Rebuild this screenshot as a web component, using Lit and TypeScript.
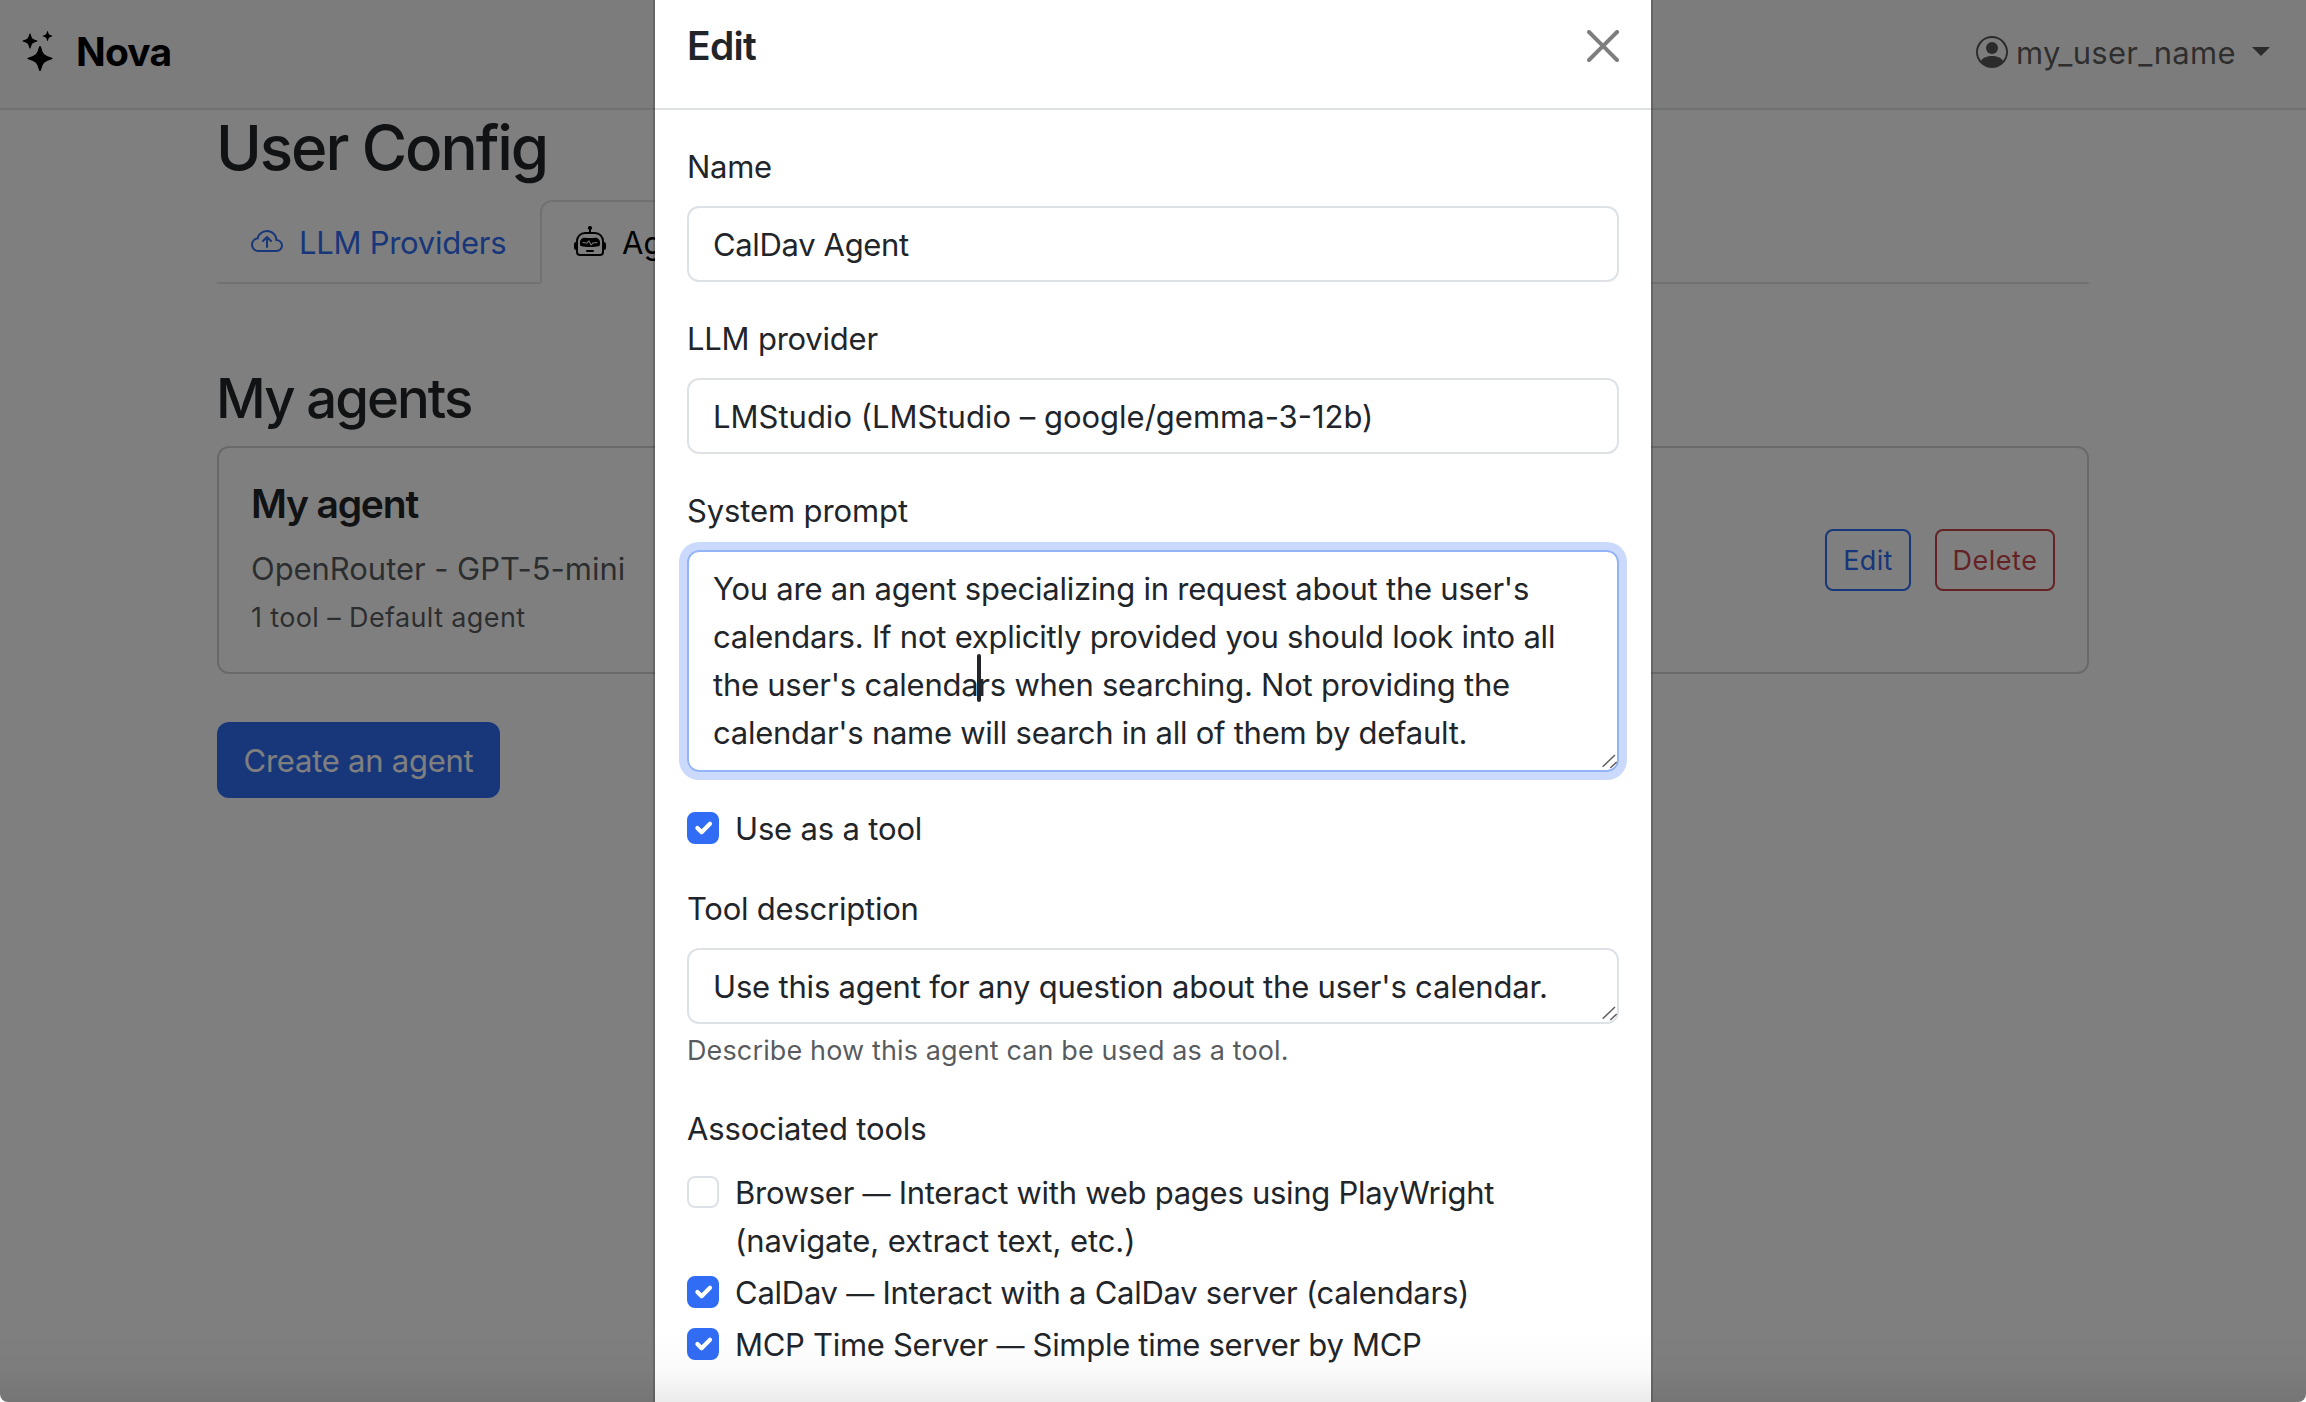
import { LitElement, html, css, svg, nothing } from 'lit';
import { customElement, property } from 'lit/decorators.js';

const ICONS: Record<string, string[]> = {
  stars: [
    'M7.657 6.247c.11-.33.576-.33.686 0l.645 1.937a2.89 2.89 0 0 0 1.829 1.828l1.936.645c.33.11.33.576 0 .686l-1.937.645a2.89 2.89 0 0 0-1.828 1.829l-.645 1.936a.361.361 0 0 1-.686 0l-.645-1.937a2.89 2.89 0 0 0-1.828-1.828l-1.937-.645a.361.361 0 0 1 0-.686l1.937-.645a2.89 2.89 0 0 0 1.828-1.828z',
    'M3.794 1.148a.217.217 0 0 1 .412 0l.387 1.162c.173.518.579.924 1.097 1.097l1.162.387a.217.217 0 0 1 0 .412l-1.162.387A1.73 1.73 0 0 0 4.593 5.69l-.387 1.162a.217.217 0 0 1-.412 0L3.407 5.69A1.73 1.73 0 0 0 2.31 4.593l-1.162-.387a.217.217 0 0 1 0-.412l1.162-.387A1.73 1.73 0 0 0 3.407 2.31z',
    'M10.863.099a.145.145 0 0 1 .274 0l.258.774c.115.346.386.617.732.732l.774.258a.145.145 0 0 1 0 .274l-.774.258a1.16 1.16 0 0 0-.732.732l-.258.774a.145.145 0 0 1-.274 0l-.258-.774a1.16 1.16 0 0 0-.732-.732L9.1 2.137a.145.145 0 0 1 0-.274l.774-.258c.346-.115.617-.386.732-.732z',
  ],
  cloud: [
    'M7.646 5.146a.5.5 0 0 1 .708 0l2 2a.5.5 0 0 1-.708.708L8.5 6.707V10.5a.5.5 0 0 1-1 0V6.707L6.354 7.854a.5.5 0 1 1-.708-.708z',
    'M4.406 3.342A5.53 5.53 0 0 1 8 2c2.69 0 4.923 2 5.166 4.579C14.758 6.804 16 8.137 16 9.773 16 11.569 14.502 13 12.687 13H3.781C1.708 13 0 11.366 0 9.318c0-1.763 1.266-3.223 2.942-3.593.143-.863.698-1.723 1.464-2.383m.653.757c-.757.653-1.153 1.44-1.153 2.056v.448l-.445.049C2.064 6.805 1 7.952 1 9.318 1 10.785 2.23 12 3.781 12h8.906C13.98 12 15 10.988 15 9.773c0-1.216-1.02-2.228-2.313-2.228h-.5v-.5C12.188 4.825 10.328 3 8 3a4.53 4.53 0 0 0-2.941 1.1z',
  ],
  robot: [
    'M6 12.5a.5.5 0 0 1 .5-.5h3a.5.5 0 0 1 0 1h-3a.5.5 0 0 1-.5-.5M3 8.062C3 6.76 4.235 5.765 5.53 5.886a26.6 26.6 0 0 0 4.94 0C11.765 5.765 13 6.76 13 8.062v1.157a.93.93 0 0 1-.765.935c-.845.147-2.34.346-4.235.346s-3.39-.2-4.235-.346A.93.93 0 0 1 3 9.219zm4.542-.827a.25.25 0 0 0-.217.068l-.92.9a25 25 0 0 1-1.871-.183.25.25 0 0 0-.068.495c.55.076 1.232.149 2.02.193a.25.25 0 0 0 .189-.071l.754-.736.847 1.71a.25.25 0 0 0 .404.062l.932-.97a25 25 0 0 0 1.922-.188.25.25 0 0 0-.068-.495c-.538.074-1.207.145-1.98.189a.25.25 0 0 0-.166.076l-.754.785-.842-1.7a.25.25 0 0 0-.182-.135',
    'M8.5 1.866a1 1 0 1 0-1 0V3h-2A4.5 4.5 0 0 0 1 7.5V8a1 1 0 0 0-1 1v2a1 1 0 0 0 1 1v1a2 2 0 0 0 2 2h10a2 2 0 0 0 2-2v-1a1 1 0 0 0 1-1V9a1 1 0 0 0-1-1v-.5A4.5 4.5 0 0 0 10.5 3h-2zM14 7.5V13a1 1 0 0 1-1 1H3a1 1 0 0 1-1-1V7.5A3.5 3.5 0 0 1 5.5 4h5A3.5 3.5 0 0 1 14 7.5',
  ],
  person: [
    'M11 6a3 3 0 1 1-6 0 3 3 0 0 1 6 0',
    'M0 8a8 8 0 1 1 16 0A8 8 0 0 1 0 8m8-7a7 7 0 0 0-5.468 11.37C3.242 11.226 4.805 10 8 10s4.757 1.225 5.468 2.37A7 7 0 0 0 8 1',
  ],
  close: [
    'M.293.293a1 1 0 0 1 1.414 0L8 6.586 14.293.293a1 1 0 1 1 1.414 1.414L9.414 8l6.293 6.293a1 1 0 0 1-1.414 1.414L8 9.414l-6.293 6.293a1 1 0 0 1-1.414-1.414L6.586 8 .293 1.707a1 1 0 0 1 0-1.414',
  ],
};

@customElement('ui-icon')
class UiIcon extends LitElement {
  @property() name = '';
  static styles = css`
    :host { display: block; width: 32px; height: 32px; flex: none; }
    .glyph { display: block; width: 100%; height: 100%; fill: currentColor; }
  `;
  render() {
    return html`<svg class="glyph" viewBox="0 0 16 16" aria-hidden="true">
      ${(ICONS[this.name] ?? []).map((d) => svg`<path fill-rule="evenodd" d=${d}></path>`)}
    </svg>`;
  }
}

@customElement('check-row')
class CheckRow extends LitElement {
  @property({ type: Boolean }) checked = false;
  static styles = css`
    :host { display: flex; gap: 16px; min-height: 48px; }
    .box {
      box-sizing: border-box; width: 32px; height: 32px; margin-top: 8px; flex: none;
      border: 2px solid #dee2e6; border-radius: 8px; background: #fff;
    }
    .box.on { background: #316cf4; border-color: #316cf4; }
    .mark { display: block; width: 28px; height: 28px; fill: none; stroke: #fff; stroke-width: 3; stroke-linecap: round; stroke-linejoin: round; }
  `;
  render() {
    return html`<span class="box ${this.checked ? 'on' : ''}" role="checkbox" aria-checked=${this.checked ? 'true' : 'false'}>
        ${this.checked ? html`<svg class="mark" viewBox="0 0 20 20"><path d="m6 10 3 3 6-6"></path></svg>` : nothing}
      </span><slot></slot>`;
  }
}

@customElement('agents-page')
class AgentsPage extends LitElement {
  static styles = css`
    :host { display: block; }
    .nav {
      box-sizing: border-box; height: 110px; padding: 0 36px 4px 20px;
      display: flex; align-items: center; justify-content: space-between;
      background: #f8f9fa; border-bottom: 2px solid #dee2e6;
    }
    .brand { display: flex; align-items: center; gap: 16px; color: #000; }
    .logo { width: 40px; height: 40px; margin-bottom: 2px; }
    .brand-name { font-size: 39px; font-weight: 700; line-height: 60px; letter-spacing: -.83px; }
    .user { display: flex; align-items: center; color: rgba(0, 0, 0, .65); }
    .user-name { width: 236px; margin-left: 8px; padding-top: 2px; line-height: 48px; letter-spacing: .28px; }
    .caret { width: 0; height: 0; margin-bottom: 2px; border: 9px solid transparent; border-top-color: currentColor; border-bottom: 0; }
    .main { width: 1872px; margin: 0 auto; }
    .title { margin: 0 0 14px -1px; font-size: 62px; font-weight: 540; line-height: 76px; letter-spacing: -2.1px; }
    .tabs { display: flex; height: 84px; }
    .tab { box-sizing: border-box; display: flex; align-items: center; gap: 16px; padding: 0 34px; border-bottom: 2px solid #dee2e6; line-height: 48px; }
    .tab-llm { width: 323px; padding-right: 0; color: #316cf4; letter-spacing: -.27px; padding-top: 2px; }
    .tab-active { width: 220px; padding: 0 32px; color: #000; border: 2px solid #dee2e6; border-bottom-color: #fff; border-radius: 12px 12px 0 0; }
    .tab-text { padding-top: 1px; }
    .tab-fill { flex: 1; border-bottom: 2px solid #dee2e6; }
    .heading { margin: 81px 0 15px -1px; font-size: 54.5px; font-weight: 540; line-height: 66px; letter-spacing: -1.95px; }
    .card {
      box-sizing: border-box; height: 228px; padding: 32px; display: flex; align-items: center; justify-content: space-between;
      border: 2px solid rgba(0, 0, 0, .175); border-radius: 12px;
    }
    .info { height: 160px; }
    .name { margin: 0 0 16px; font-size: 39px; font-weight: 560; line-height: 48px; letter-spacing: -1.2px; }
    .model { height: 48px; line-height: 50px; color: rgba(33, 37, 41, .75); letter-spacing: -.05px; margin-bottom: 5px; }
    .meta { font-size: 27px; line-height: 42px; color: rgba(33, 37, 41, .75); letter-spacing: .37px; }
    .actions { display: flex; gap: 24px; }
    .btn { box-sizing: border-box; font-size: 27px; line-height: 60px; height: 62px; text-align: center; border: 2px solid; border-radius: 8px; }
    .edit { width: 86px; color: #316cf4; letter-spacing: .3px; }
    .delete { width: 120px; color: #cb444a; letter-spacing: .5px; }
    .create { width: 283px; height: 76px; margin-top: 48px; border-radius: 12px; line-height: 78px; text-align: center; color: #fff; background: #316cf4; letter-spacing: -.25px; }
  `;
  render() {
    return html`
      <header class="nav">
        <div class="brand"><ui-icon class="logo" name="stars"></ui-icon><span class="brand-name">Nova</span></div>
        <div class="user"><ui-icon name="person"></ui-icon><span class="user-name">my_user_name</span><span class="caret"></span></div>
      </header>
      <main class="main">
        <h1 class="title">User Config</h1>
        <nav class="tabs">
          <div class="tab tab-llm"><ui-icon name="cloud"></ui-icon><span class="tab-text">LLM Providers</span></div>
          <div class="tab tab-active"><ui-icon name="robot"></ui-icon><span class="tab-text">Agents</span></div>
          <div class="tab-fill"></div>
        </nav>
        <h2 class="heading">My agents</h2>
        <section class="card">
          <div class="info">
            <h3 class="name">My agent</h3>
            <div class="model">OpenRouter - GPT-5-mini</div>
            <div class="meta">1 tool – Default agent</div>
          </div>
          <div class="actions"><div class="btn edit">Edit</div><div class="btn delete">Delete</div></div>
        </section>
        <div class="create">Create an agent</div>
      </main>`;
  }
}

@customElement('edit-dialog')
class EditDialog extends LitElement {
  static styles = css`
    :host { display: block; box-sizing: border-box; border: 2px solid rgba(0, 0, 0, .175); background: #fff; background-clip: padding-box; height: 1500px; line-height: 50px; }
    .head { display: flex; align-items: center; justify-content: space-between; height: 60px; padding: 32px; border-bottom: 2px solid #dee2e6; }
    .title { margin: 0; font-size: 39px; font-weight: 560; line-height: 60px; letter-spacing: -.7px; }
    .close { opacity: .5; color: #000; }
    .body { padding: 32px; display: flex; flex-direction: column; }
    .label { height: 48px; margin-bottom: 16px; }
    .control { box-sizing: border-box; position: relative; padding: 12px 24px; border: 2px solid #dee2e6; border-radius: 12px; height: 76px; margin-bottom: 32px; white-space: nowrap; }
    .prompt { height: 222px; border-color: #93b5f8; box-shadow: 0 0 0 8px rgba(49, 108, 244, .25); }
    .line { display: block; height: 48px; }
    .cursor { position: absolute; left: 288px; top: 102px; width: 4px; height: 48px; border-radius: 2px; background: #212529; }
    .grip { position: absolute; right: 0; bottom: 0; width: 16px; height: 16px; fill: none; stroke: #5f5f5f; stroke-width: 1.5; }
    .tool { height: 48px; margin-bottom: 32px; letter-spacing: -.167px; }
    .desc { margin-bottom: 6px; }
    .help { font-size: 27px; line-height: 42px; margin-bottom: 32px; color: rgba(33, 37, 41, .75); letter-spacing: .13px; }
    .list { display: flex; flex-direction: column; gap: 4px; }
    .dash { font-size: 28px; line-height: 1; }
    .l-name { letter-spacing: -.3px; }
    .v-name { letter-spacing: -.345px; }
    .l-llm { letter-spacing: -.22px; }
    .v-llm { letter-spacing: 0; }
    .l-prompt { letter-spacing: -.12px; }
    .p1 { letter-spacing: -.235px; }
    .p2 { letter-spacing: -.223px; }
    .p3 { letter-spacing: -.245px; }
    .p4 { letter-spacing: -.26px; }
    .l-desc { letter-spacing: -.233px; }
    .v-desc { letter-spacing: -.185px; }
    .l-tools { letter-spacing: -.15px; }
    .t1 { letter-spacing: -.27px; }
    .t2 { letter-spacing: -.072px; }
    .t3 { letter-spacing: -.26px; }
    .t4 { letter-spacing: -.29px; }
  `;
  private grip() {
    return html`<svg class="grip" viewBox="0 0 16 16"><path d="M1.7 12.7 14 1M9.3 14 15.7 8"></path></svg>`;
  }
  render() {
    return html`
      <header class="head"><h5 class="title">Edit</h5><ui-icon class="close" name="close"></ui-icon></header>
      <div class="body">
        <div class="label l-name">Name</div>
        <div class="control v-name">CalDav Agent</div>
        <div class="label l-llm">LLM provider</div>
        <div class="control v-llm">LMStudio (LMStudio – google/gemma-3-12b)</div>
        <div class="label l-prompt">System prompt</div>
        <div class="control prompt">
          <span class="line p1">You are an agent specializing in request about the user's</span>
          <span class="line p2">calendars. If not explicitly provided you should look into all</span>
          <span class="line p3">the user's calendars when searching. Not providing the</span>
          <span class="line p4">calendar's name will search in all of them by default.</span>
          <span class="cursor"></span>${this.grip()}
        </div>
        <check-row class="tool" checked>Use as a tool</check-row>
        <div class="label l-desc">Tool description</div>
        <div class="control desc v-desc">Use this agent for any question about the user's calendar.${this.grip()}</div>
        <div class="help">Describe how this agent can be used as a tool.</div>
        <div class="label l-tools">Associated tools</div>
        <div class="list">
          <check-row><div><span class="line t1">Browser <span class="dash">—</span> Interact with web pages using PlayWright</span><span class="line t2">(navigate, extract text, etc.)</span></div></check-row>
          <check-row checked><span class="line t3">CalDav <span class="dash">—</span> Interact with a CalDav server (calendars)</span></check-row>
          <check-row checked><span class="line t4">MCP Time Server <span class="dash">—</span> Simple time server by MCP</span></check-row>
        </div>
      </div>`;
  }
}

@customElement('app-root')
class AppRoot extends LitElement {
  static styles = css`
    :host {
      display: block; position: relative; width: 2306px; height: 1402px; overflow: hidden;
      background: #fff; color: #212529; border-radius: 0 0 8px 8px;
      font-family: Inter, "Liberation Sans", sans-serif; font-size: 31px;
    }
    .backdrop { position: absolute; inset: 0; background: rgba(0, 0, 0, .5); }
    .dialog { position: absolute; left: 653px; top: -18px; width: 1000px; }
    .fade { position: absolute; left: 0; right: 0; bottom: 0; height: 72px; background: linear-gradient(rgba(0, 0, 0, 0), rgba(0, 0, 0, .02) 55%, rgba(0, 0, 0, .08)); }
  `;
  render() {
    return html`<agents-page></agents-page>
      <div class="backdrop"></div>
      <edit-dialog class="dialog"></edit-dialog>
      <div class="fade"></div>`;
  }
}
